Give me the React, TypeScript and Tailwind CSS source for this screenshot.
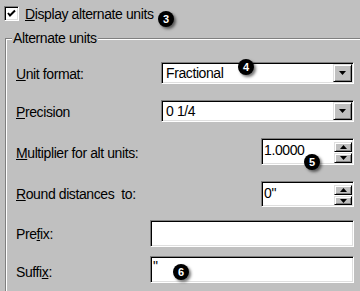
import React from "react";

function Tri({ up }: { up?: boolean }) {
  return (
    <svg width="7" height="4" viewBox="0 0 7 4" className="block">
      {up ? <polygon points="3.5,0 7,4 0,4" fill="#000" /> : <polygon points="0,0 7,0 3.5,4" fill="#000" />}
    </svg>
  );
}

function Combo({ value }: { value: string }) {
  return (
    <div className="flex h-[22px] w-[193px] bg-white border border-t-[#808080] border-l-[#808080] border-b-white border-r-white shadow-[inset_1px_1px_0_#000,inset_-1px_-1px_0_#dfdfdf]">
      <div className="flex-1 flex items-center pl-[4px] leading-[16px]">{value}</div>
      <div className="w-[19px] my-[1px] mr-[1px] flex items-center justify-center bg-[#c0c0c0] border border-t-[#dfdfdf] border-l-[#dfdfdf] border-b-black border-r-black shadow-[inset_1px_1px_0_#fff,inset_-1px_-1px_0_#808080]">
        <Tri />
      </div>
    </div>
  );
}

function Spinner({ value, h }: { value: string; h: string }) {
  return (
    <div className={`flex ${h} w-[93px] bg-white border border-t-[#808080] border-l-[#808080] border-b-white border-r-white shadow-[inset_1px_1px_0_#000,inset_-1px_-1px_0_#dfdfdf]`}>
      <div className="flex-1 pl-[2px] pt-[3px] leading-[16px]">{value}</div>
      <div className="flex flex-col w-[18px] mt-[3px] mb-[1px] mr-[1px] gap-[1px]">
        <div className="h-[10px] flex items-center justify-center bg-[#c0c0c0] border border-t-[#dfdfdf] border-l-[#dfdfdf] border-b-black border-r-black shadow-[inset_1px_1px_0_#fff,inset_-1px_-1px_0_#808080]">
          <Tri up />
        </div>
        <div className="flex-1 flex items-center justify-center bg-[#c0c0c0] border border-t-[#dfdfdf] border-l-[#dfdfdf] border-b-black border-r-black shadow-[inset_1px_1px_0_#fff,inset_-1px_-1px_0_#808080]">
          <Tri />
        </div>
      </div>
    </div>
  );
}

function TextBox({ value }: { value: string }) {
  return (
    <div className="h-[27px] w-[204px] bg-white pl-[2px] pt-[1px] leading-[16px] border border-t-[#808080] border-l-[#808080] border-b-white border-r-white shadow-[inset_1px_1px_0_#000,inset_-1px_-1px_0_#dfdfdf]">
      {value}
    </div>
  );
}

function Badge({ n, cls }: { n: string; cls: string }) {
  return (
    <div
      className={`absolute ${cls} w-[16px] h-[16px] rounded-full bg-black text-white flex items-center justify-center text-[11px] font-bold leading-none tracking-normal shadow-[2px_2px_3px_rgba(0,0,0,0.55)]`}
    >
      {n}
    </div>
  );
}

export default function App() {
  return (
    <div
      className="relative w-[360px] h-[291px] overflow-hidden bg-[#c0c0c0] text-black text-[14px] tracking-[-0.4px] leading-[16px] flex flex-col"
      style={{ fontFamily: '"Liberation Sans", Arial, sans-serif' }}
    >
      <div className="flex items-center h-[15px] mt-[6px] ml-[4px]">
        <div className="w-[15px] h-[15px] bg-white flex items-center justify-center border border-t-[#808080] border-l-[#808080] border-b-white border-r-white shadow-[inset_1px_1px_0_#000,inset_-1px_-1px_0_#dfdfdf]">
          <svg width="9" height="9" viewBox="0 0 9 9" className="block">
            <polyline points="1,4 3,6.5 8,1.5" fill="none" stroke="#000" strokeWidth="2" />
          </svg>
        </div>
        <span className="ml-[6px]">
          <u>D</u>isplay alternate units
        </span>
      </div>

      <div className="mt-[17px] ml-[5px] flex-1 flex flex-col border-t border-l border-[#808080] shadow-[inset_1px_1px_0_#fff]">
        <span className="block w-fit -mt-[9px] ml-[6px] px-[1px] bg-[#c0c0c0]">Alternate units</span>

        <div className="mt-[16px] flex items-start justify-between pl-[10px] pr-[6px]">
          <span className="mt-[4px]">
            <u>U</u>nit format:
          </span>
          <Combo value="Fractional" />
        </div>

        <div className="mt-[16px] flex items-start justify-between pl-[10px] pr-[6px]">
          <span className="mt-[4px]">
            <u>P</u>recision
          </span>
          <Combo value="0 1/4" />
        </div>

        <div className="mt-[16px] flex items-start justify-between pl-[10px] pr-[6px]">
          <span className="mt-[7px]">
            <u>M</u>ultiplier for alt units:
          </span>
          <Spinner value="1.0000" h="h-[27px]" />
        </div>

        <div className="mt-[16px] flex items-start justify-between pl-[10px] pr-[6px]">
          <span className="mt-[5px] whitespace-pre">
            <u>R</u>ound distances  to:
          </span>
          <Spinner value={'0"'} h="h-[26px]" />
        </div>

        <div className="mt-[13px] flex items-start justify-between pl-[10px] pr-[6px]">
          <span className="mt-[6px]">
            Pre<u>f</u>ix:
          </span>
          <TextBox value="" />
        </div>

        <div className="mt-[9px] flex items-start justify-between pl-[10px] pr-[6px]">
          <span className="mt-[8px]">
            Suffi<u>x</u>:
          </span>
          <TextBox value={'"'} />
        </div>
      </div>

      <Badge n="3" cls="left-[158px] top-[11px]" />
      <Badge n="4" cls="left-[238px] top-[59px]" />
      <Badge n="5" cls="left-[304px] top-[154px]" />
      <Badge n="6" cls="left-[173px] top-[264px]" />
    </div>
  );
}
